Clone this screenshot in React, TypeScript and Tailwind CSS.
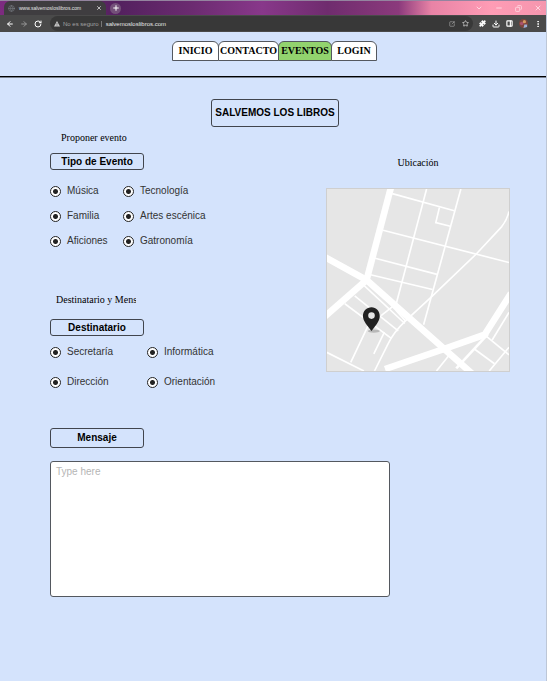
import React from "react";
import {
  ArrowLeft,
  ArrowRight,
  ChevronDown,
  Copy,
  Download,
  Globe,
  Minus,
  MoreVertical,
  PanelRight,
  Plus,
  Puzzle,
  RotateCw,
  SquareArrowOutUpRight,
  Star,
  X,
} from "lucide-react";

const serif = "font-['Liberation_Serif',serif]";
const sans = "font-['Liberation_Sans',sans-serif]";

function TabStrip() {
  return (
    <div className="flex h-[15px] items-stretch border-t border-[#94849f] bg-[linear-gradient(90deg,#7d2b80_0%,#54215f_22%,#6b2b70_35%,#88388a_48%,#6f2c6e_60%,#8b3a7c_73%,#e883a6_79%,#ff9cb5_90%,#f596ae_100%)]">
      <div className="ml-1 flex w-[102px] items-center rounded-t-md bg-[#3f3d40] pr-1 pl-1 text-[#e4e4e4]">
        <Globe className="size-[7px] text-[#7b8084]" />
        <span className="ml-1 flex-1 text-[5px] leading-none whitespace-nowrap">www.salvemosloslibros.com</span>
        <button type="button" aria-label="Cerrar pestaña">
          <X className="size-[6px]" strokeWidth={3} />
        </button>
      </div>
      <button
        type="button"
        aria-label="Nueva pestaña"
        className="ml-1 flex size-[11px] items-center justify-center self-center rounded-full bg-[#735079] text-white"
      >
        <Plus className="size-[8px]" strokeWidth={3} />
      </button>
      <div className="mr-1 ml-auto flex items-center gap-3 text-[#ffd5df]">
        <button type="button" aria-label="Buscar pestañas"><ChevronDown className="size-[8px]" strokeWidth={3} /></button>
        <button type="button" aria-label="Minimizar"><Minus className="size-[8px]" strokeWidth={3} /></button>
        <button type="button" aria-label="Restaurar"><Copy className="size-[7px] -scale-x-100" strokeWidth={3} /></button>
        <button type="button" aria-label="Cerrar"><X className="size-[8px]" strokeWidth={3} /></button>
      </div>
    </div>
  );
}

function Toolbar() {
  return (
    <div className="flex h-[17px] items-center bg-[#4a4a4a] pr-1 pl-[6px] text-white">
      <div className="flex gap-[6px]">
        <button type="button" aria-label="Atrás"><ArrowLeft className="size-[8px]" strokeWidth={3} /></button>
        <button type="button" aria-label="Adelante"><ArrowRight className="size-[8px] text-[#969696]" strokeWidth={3} /></button>
        <button type="button" aria-label="Recargar"><RotateCw className="size-[8px]" strokeWidth={3} /></button>
      </div>
      <div className="ml-2 flex h-[15px] flex-1 items-center rounded-full bg-[#383838] pr-1 pl-1 text-[6px] leading-none">
        <svg viewBox="0 0 10 10" className="size-[6px]">
          <path d="M5 0 10 9H0Z" fill="#c8c8c8" />
          <path d="M5 3.5V6M5 7V8" stroke="#383838" />
        </svg>
        <span className="ml-[3px] border-r border-[#777777] pr-[2px] text-[#a2a2a2]">No es seguro</span>
        <span className="ml-1 text-[#e6e6e6]">salvemosloslibros.com</span>
        <span className="ml-auto flex gap-[7px] text-[#c2c2c2]">
          <button type="button" aria-label="Compartir"><SquareArrowOutUpRight className="size-[6px]" /></button>
          <button type="button" aria-label="Favoritos"><Star className="size-[7px]" strokeWidth={3} /></button>
        </span>
      </div>
      <div className="ml-[6px] flex items-center gap-[6px]">
        <button type="button" aria-label="Extensiones"><Puzzle className="size-[7px]" fill="currentColor" /></button>
        <button type="button" aria-label="Descargas"><Download className="size-[8px]" strokeWidth={3} /></button>
        <button type="button" aria-label="Panel lateral"><PanelRight className="size-[7px]" strokeWidth={4} /></button>
        <button type="button" aria-label="Perfil">
          <svg viewBox="0 0 10 10" className="size-[9px]">
            <circle cx="5" cy="5" r="5" fill="#7e453c" />
            <circle cx="3" cy="5" r="2" fill="#a9536f" />
            <circle cx="6" cy="3" r="1.8" fill="#d69a62" />
            <path d="M5 10 6 6 9 6 9 9Z" fill="#9ab0d8" />
          </svg>
        </button>
        <button type="button" aria-label="Menú"><MoreVertical className="size-[8px]" strokeWidth={3} /></button>
      </div>
    </div>
  );
}

const links = [
  { label: "INICIO", style: "w-[47px] bg-white" },
  { label: "CONTACTO", style: "w-[61px] bg-white" },
  { label: "EVENTOS", style: "w-[54px] bg-[#92d36e]" },
  { label: "LOGIN", style: "w-[46px] bg-white" },
];

function Navigation() {
  return (
    <header className="border-b border-black pt-[9px] pb-[15px] shadow-[0_1px_0_#78818f]">
      <nav className={`flex justify-center pl-[2px] ${serif}`}>
        {links.map(({ label, style }) => (
          <a
            key={label}
            href="#"
            className={`-mr-px flex h-[20px] items-center justify-center rounded-t-md border border-[#54585f] text-[10px] leading-none font-bold text-black ${style}`}
          >
            {label}
          </a>
        ))}
      </nav>
    </header>
  );
}

function Heading({ children, className }: { children: React.ReactNode; className: string }) {
  return (
    <h2
      className={`flex w-[94px] items-center justify-center rounded-[3px] border border-[#41454d] text-[10px] leading-none font-bold ${className}`}
    >
      {children}
    </h2>
  );
}

function Choice({ label }: { label: string }) {
  return (
    <label className="flex h-3 items-center gap-[6px] text-[10px] leading-none whitespace-nowrap text-[#333333]">
      <input
        type="radio"
        defaultChecked
        className="size-[11px] shrink-0 appearance-none rounded-full border border-[#222222] bg-white bg-[radial-gradient(circle,#222222_0_2px,transparent_3px)]"
      />
      {label}
    </label>
  );
}

function LocationMap() {
  return (
    <svg
      viewBox="0 0 552 552"
      role="img"
      aria-label="Mapa de la ubicación"
      className="block aspect-square w-full border border-[#cfcfcf] bg-[#e6e6e6]"
    >
      <g fill="none" stroke="#ffffff">
        <g strokeWidth="20">
          <path d="M194 -5 120 276" />
          <path d="M-8 206 120 276 440 560" />
          <path d="M120 276-8 388" />
          <path d="M176 546 358 484 478 442 558 316" />
        </g>
        <g strokeWidth="5">
          <path d="M302 0 210 348 164 384" />
          <path d="M406 0 293 412" />
          <path d="M198 14 386 66" />
          <path d="M341 56 330 102 374 113" />
          <path d="M170 125 552 223" />
          <path d="M146 210 334 259" />
          <path d="M132 260 320 305" />
          <path d="M552 68Q546 94 530 114L452 198 316 328 238 400Q202 434 184 472L144 552" />
          <path d="M112 292 236 408" />
          <path d="M84 324 216 430" />
          <path d="M54 348 196 454" />
          <path d="M188 344 238 400" />
          <path d="M124 416 72 526" />
          <path d="M142 500 174 434" />
          <path d="M-4 494 112 552" />
          <path d="M332 552 374 500" />
          <path d="M392 544 488 440" strokeWidth="8" />
          <path d="M552 374 501 458" />
          <path d="M480 444 552 503" />
          <path d="M448 486 508 530" />
          <path d="M492 552 552 480" />
        </g>
      </g>
      <ellipse cx="142" cy="431" rx="18" ry="5" fill="#b8b8b8" />
      <path
        fill="#222222"
        fillRule="evenodd"
        d="M135 359C120 359 109 371 109 385C109 402 124 415 135 431C146 415 160 402 160 385C160 371 149 359 135 359ZM135 374A10 10 0 1 1 135 394A10 10 0 1 1 135 374Z"
      />
    </svg>
  );
}

export default function App() {
  return (
    <div className={`min-h-screen border-r border-[#bdc7d7] bg-[#d4e3fc] text-black ${sans}`}>
      <TabStrip />
      <Toolbar />
      <Navigation />
      <main className="pt-[22px] pr-9 pb-[84px] pl-[50px]">
        <div className="flex justify-center pr-[10px]">
          <h1 className="flex h-[28px] w-[128px] items-center justify-center rounded-[3px] border border-[#41454d] text-[10px] leading-none font-bold">
            SALVEMOS LOS LIBROS
          </h1>
        </div>
        <div className="flex items-start justify-between pt-1">
          <div>
            <p className={`pl-[11px] text-[10px] leading-[14px] ${serif}`}>Proponer evento</p>
            <Heading className="mt-2 h-[17px]">Tipo de Evento</Heading>
            <div className="mt-[15px] grid grid-cols-[73px_auto] gap-y-[13px]">
              <Choice label="Música" />
              <Choice label="Tecnología" />
              <Choice label="Familia" />
              <Choice label="Artes escénica" />
              <Choice label="Aficiones" />
              <Choice label="Gatronomía" />
            </div>
            <p className={`mt-[46px] ml-[6px] w-[80px] overflow-hidden text-[10px] leading-[14px] whitespace-nowrap ${serif}`}>
              Destinatario y Mensaje
            </p>
            <Heading className="mt-3 h-[17px]">Destinatario</Heading>
            <div className="mt-[10px] grid grid-cols-[97px_auto] gap-y-[18px]">
              <Choice label="Secretaría" />
              <Choice label="Informática" />
              <Choice label="Dirección" />
              <Choice label="Orientación" />
            </div>
          </div>
          <section className="w-[184px] pt-[25px]">
            <p className={`mb-[18px] text-center text-[10px] leading-[14px] ${serif}`}>Ubicación</p>
            <LocationMap />
          </section>
        </div>
        <Heading className="mt-10 h-[20px]">
          <label htmlFor="mensaje">Mensaje</label>
        </Heading>
        <textarea
          id="mensaje"
          placeholder="Type here"
          className="mt-[13px] block h-[136px] w-[340px] max-w-full resize-none rounded-[3px] border border-[#54585f] bg-white px-[5px] py-1 text-[10px] leading-3 placeholder:text-[#b5b5b5]"
        />
      </main>
    </div>
  );
}
